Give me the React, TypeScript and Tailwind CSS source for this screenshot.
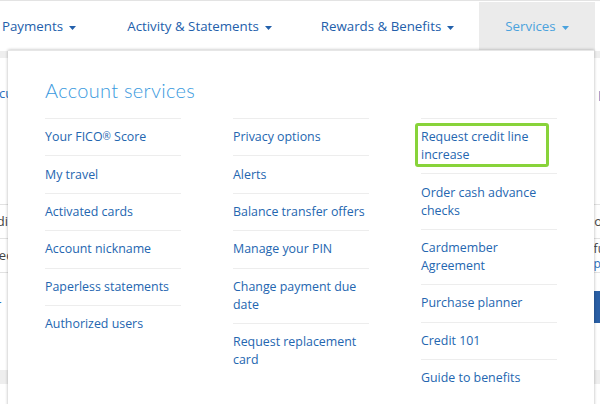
import { ReactNode } from 'react';

const columns: string[][] = [
  ['FICO', 'My travel', 'Activated cards', 'Account nickname', 'Paperless statements', 'Authorized users'],
  [
    'Privacy options',
    'Alerts',
    'Balance transfer offers',
    'Manage your PIN',
    'Change payment due date',
    'Request replacement card',
  ],
  [
    'Request credit line increase',
    'Order cash advance checks',
    'Cardmember Agreement',
    'Purchase planner',
    'Credit 101',
    'Guide to benefits',
  ],
];

function Caret() {
  return (
    <svg width="7" height="4" viewBox="0 0 7 4" className="ml-[6px] mt-[2px] shrink-0">
      <path d="M0 0h7L3.5 4z" fill="currentColor" />
    </svg>
  );
}

function NavItem({ label, width, active }: { label: string; width: string; active?: boolean }) {
  return (
    <div
      className={`flex items-center justify-center whitespace-nowrap h-[49px] text-[13.3px] ${width} ${
        active ? 'bg-[#ebebeb] text-[#4aa2dd]' : 'text-[#2360ab]'
      }`}
    >
      {label}
      <Caret />
    </div>
  );
}

function Row({ children }: { children: ReactNode }) {
  return <div className="border-t border-[#ededed] py-[9.2px] leading-[18px]">{children}</div>;
}

function Item({ label }: { label: string }) {
  if (label === 'FICO') {
    return (
      <span>
        Your FICO<sup className="text-[10px] relative -top-[1px]">®</sup> Score
      </span>
    );
  }
  if (label === 'Request credit line increase') {
    return (
      <div className="relative">
        {/* highlight box */}
        <div className="absolute left-[-6px] top-[-5px] w-[134px] h-[44px] border-[3px] border-[#88d33a] rounded-[3px]" />
        <span>{label}</span>
      </div>
    );
  }
  return <span>{label}</span>;
}

export default function App() {
  return (
    <div
      className="relative w-[600px] h-[404px] overflow-hidden bg-white"
      style={{ fontFamily: '"Open Sans", "Liberation Sans", sans-serif' }}
    >
      {/* top nav */}
      <div className="border-t border-[#e3e3e3] h-[51px] pt-[1px]">
        <div className="flex ml-[-25px]">
          <NavItem label="Payments" width="w-[128px]" />
          <NavItem label="Activity & Statements" width="w-[193px]" />
          <NavItem label="Rewards & Benefits" width="w-[183px]" />
          <NavItem label="Services" width="w-[116px]" active />
        </div>
      </div>

      {/* page underneath the menu */}
      <div className="text-[13px] text-[#444] whitespace-nowrap">
        <div className="h-[7px] bg-[#eeeeee]" />
        <div className="h-[80px] flex justify-between items-center pb-[8px]">
          <span className="-ml-[20px] text-[#2a70c0]">Discu</span>
          <span className="-mr-[20px] text-[#2a70c0]">pay</span>
        </div>
        <div className="h-[66px]" />
        <div className="border-t border-[#e2e2e2] h-[34px] flex justify-between items-center">
          <span className="-ml-[24px]">Credi</span>
          <span className="-mr-[18px]">point</span>
        </div>
        <div className="border-t border-[#e2e2e2] h-[34px] flex justify-between items-center">
          <span className="-ml-[26px]">Linked</span>
          <div className="-mr-[18px] text-[12px] leading-[15px]">
            <div>fun</div>
            <div className="text-[#2a70c0]">plan</div>
          </div>
        </div>
        <div className="border-t border-[#e2e2e2] h-[98px] flex justify-between items-start pt-[18px]">
          <span className="-ml-[30px] text-[#2a70c0] mt-[4px]">Clear</span>
          <div className="w-[30px] h-[32px] bg-[#2a5fa5] -mr-[24px]" />
        </div>
        <div className="h-[14px] bg-[#eeeeee]" />
      </div>

      {/* Services dropdown */}
      <div className="absolute left-[8px] top-[50px] w-[586px] h-[360px] bg-white border-t border-[#e6e6e6] shadow-[0_0_3px_rgba(0,0,0,0.3)] pl-[37px]">
        <h2
          className="text-[#3a9ade] text-[20px] font-light mt-[25px] mb-[14px] leading-[28px] tracking-[0.3px]"
          style={{ fontFamily: 'Lato, "Open Sans", sans-serif' }}
        >
          Account services
        </h2>
        <div className="grid grid-cols-[136px_136px_136px] gap-x-[52px] text-[12.4px] text-[#2466b0]">
          {columns.map((col, i) => (
            <div key={i}>
              {col.map((label) => (
                <Row key={label}>
                  <Item label={label} />
                </Row>
              ))}
            </div>
          ))}
        </div>
      </div>
    </div>
  );
}
